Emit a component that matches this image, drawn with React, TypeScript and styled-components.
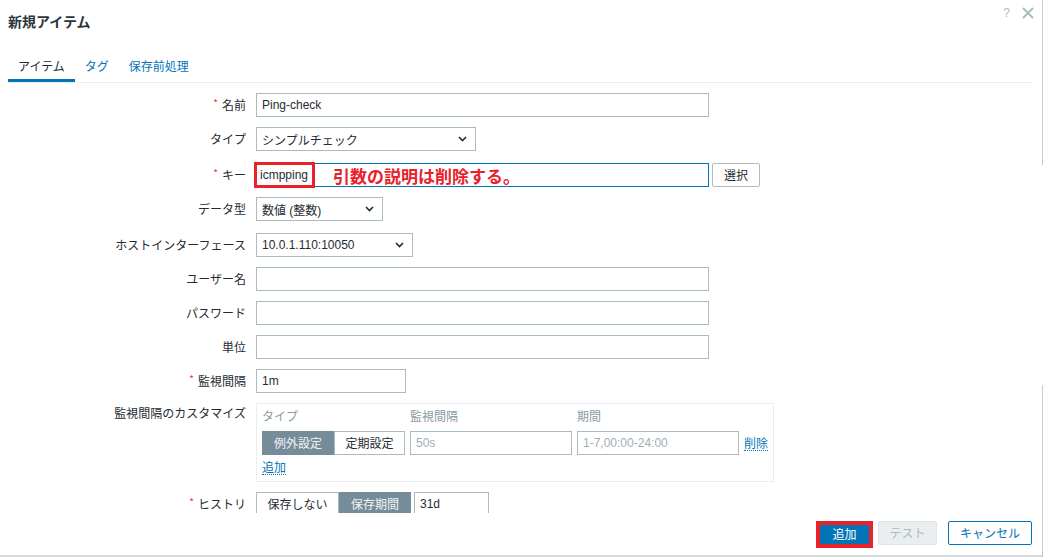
import React from "react";
import styled, { createGlobalStyle } from "styled-components";

const GlobalStyle = createGlobalStyle`
  html, body { margin: 0; padding: 0; background: #fff; }
  body {
    font-family: "Liberation Sans", Arial, "Noto Sans CJK JP", sans-serif;
    font-size: 12px;
    color: #1f2c33;
    overflow: hidden;
  }
  * { box-sizing: border-box; }
`;

const Page = styled.div`
  display: flex;
  width: 1043px;
  height: 557px;
  overflow: hidden;
  background: #fff;
`;

const Dialog = styled.div`
  width: 1042px;
  height: 557px;
  display: flex;
  flex-direction: column;
  border-bottom: 2px solid #d3dadf;
`;

const EdgeStrip = styled.div`
  width: 1px;
  display: flex;
  flex-direction: column;
`;

const EdgeSeg = styled.div<{ $h?: number; $on: boolean }>`
  ${(p) => (p.$h ? `height: ${p.$h}px;` : "flex: 1;")}
  background: ${(p) => (p.$on ? "#c7ced3" : "transparent")};
`;

const Header = styled.div`
  height: 42px;
  display: flex;
  justify-content: space-between;
  padding: 0 8px 0 8px;
  flex-shrink: 0;
`;

const Title = styled.h1`
  margin: 0;
  font-family: "Noto Sans CJK JP", sans-serif;
  font-size: 14px;
  font-weight: bold;
  line-height: 42px;
  color: #2b363d;
`;

const HeaderTools = styled.div`
  display: flex;
  align-items: center;
  gap: 12px;
  height: 26px;
`;

const HelpMark = styled.span`
  font-size: 12px;
  color: #acbbc2;
  line-height: 12px;
`;

const TabBar = styled.div`
  display: flex;
  margin: 0 10px 0 8px;
  height: 41px;
  border-bottom: 1px solid #ebeef0;
  flex-shrink: 0;
`;

const Tab = styled.div<{ $active?: boolean }>`
  height: 40px;
  padding: 17px 10px 6px 10px;
  line-height: 14px;
  font-family: "Noto Sans CJK JP", sans-serif;
  font-size: 12px;
  color: ${(p) => (p.$active ? "#1f2c33" : "#0275b8")};
  border-bottom: 3px solid ${(p) => (p.$active ? "#0275b8" : "transparent")};
`;

const FormArea = styled.div`
  height: 430px;
  overflow: hidden;
  padding: 10px 0 0 8px;
  flex-shrink: 0;
`;

const Row = styled.div<{ $mb?: number; $top?: boolean }>`
  display: grid;
  grid-template-columns: 238px auto;
  column-gap: 10px;
  align-items: ${(p) => (p.$top ? "start" : "center")};
  margin-bottom: ${(p) => p.$mb ?? 10}px;
`;

const Label = styled.div<{ $top?: boolean }>`
  display: flex;
  justify-content: flex-end;
  align-items: center;
  gap: 4px;
  line-height: 14px;
  font-family: "Noto Sans CJK JP", sans-serif;
  font-size: 12px;
  color: #1f2c33;
  padding-top: ${(p) => (p.$top ? 3 : 0)}px;
`;

const Req = styled.span`
  color: #e33734;
  font-size: 10px;
  position: relative;
  top: -2px;
`;

const Field = styled.div`
  display: flex;
  align-items: center;
  gap: 3px;
`;

const TextInput = styled.input<{ $w: number }>`
  width: ${(p) => p.$w}px;
  height: 24px;
  border: 1px solid #acbbc2;
  padding: 0 5px;
  margin: 0;
  font-family: "Liberation Sans", Arial, "Noto Sans CJK JP", sans-serif;
  font-size: 12px;
  color: #1f2c33;
  background: #fff;
  outline: none;
  &::placeholder { color: #a0aeb6; }
`;

const SelectBox = styled.div<{ $w: number }>`
  width: ${(p) => p.$w}px;
  height: 24px;
  border: 1px solid #acbbc2;
  padding: 0 8px 0 5px;
  display: flex;
  align-items: center;
  justify-content: space-between;
  font-family: "Liberation Sans", Arial, "Noto Sans CJK JP", sans-serif;
  color: #1f2c33;
  background: #fff;
`;

const Button = styled.button<{ $w: number; $variant?: "primary" | "outline" | "disabled" | "plain" }>`
  width: ${(p) => p.$w}px;
  height: 24px;
  margin: 0;
  padding: 0;
  border-radius: 2px;
  font-family: "Noto Sans CJK JP", sans-serif;
  font-size: 12px;
  line-height: 22px;
  cursor: default;
  ${(p) => {
    switch (p.$variant) {
      case "primary":
        return "background:#0275b8;border:1px solid #0275b8;color:#fff;";
      case "outline":
        return "background:#fff;border:1px solid #0275b8;color:#0275b8;";
      case "disabled":
        return "background:#ebeef0;border:1px solid #dfe4e7;color:#acbbc2;";
      default:
        return "background:#fff;border:1px solid #acbbc2;color:#1f2c33;";
    }
  }}
`;

const KeyField = styled.div`
  width: 453px;
  height: 24px;
  border: 1px solid #0275b8;
  display: flex;
  align-items: center;
  background: #fff;
`;

const RedBox = styled.div`
  width: 61px;
  height: 26px;
  margin-left: -3px;
  border: 3px solid #e8212b;
  background: #fff;
  padding-left: 3px;
  line-height: 20px;
  font-family: "Liberation Sans", Arial, sans-serif;
  font-size: 12px;
  color: #1f2c33;
  white-space: nowrap;
  flex-shrink: 0;
`;

const Annotation = styled.span`
  margin-left: 18px;
  font-family: "Noto Sans CJK JP", sans-serif;
  font-weight: bold;
  font-size: 17px;
  color: #e8212b;
  white-space: nowrap;
`;

const IntervalBox = styled.div`
  width: 518px;
  border: 1px solid #ebeef0;
  padding: 5px 5px 6px 5px;
`;

const IntervalGrid = styled.div`
  display: grid;
  grid-template-columns: 143px 162px 162px auto;
  column-gap: 5px;
  row-gap: 8px;
  align-items: center;
`;

const ColHead = styled.div`
  line-height: 14px;
  font-family: "Noto Sans CJK JP", sans-serif;
  color: #8a9ba5;
`;

const Segmented = styled.div`
  display: flex;
`;

const SegButton = styled.div<{ $w: number; $active?: boolean }>`
  width: ${(p) => p.$w}px;
  height: 24px;
  line-height: 22px;
  text-align: center;
  font-family: "Noto Sans CJK JP", sans-serif;
  font-size: 12px;
  border: 1px solid ${(p) => (p.$active ? "#768d99" : "#acbbc2")};
  background: ${(p) => (p.$active ? "#768d99" : "#fff")};
  color: ${(p) => (p.$active ? "#f0f3f5" : "#1f2c33")};
`;

const LinkText = styled.span<{ $mt?: number }>`
  display: inline-block;
  margin-top: ${(p) => p.$mt ?? 0}px;
  font-family: "Noto Sans CJK JP", sans-serif;
  color: #0275b8;
  line-height: 14px;
  border-bottom: 1px dotted #0275b8;
  justify-self: start;
`;

const Footer = styled.div`
  height: 42px;
  display: flex;
  justify-content: flex-end;
  align-items: flex-start;
  padding: 8px 10px 0 0;
  flex-shrink: 0;
`;

const RedWrap = styled.div`
  width: 57px;
  height: 27px;
  border: 4px solid #e8212b;
  margin-right: 5px;
  display: flex;
`;

const PrimaryInner = styled.div`
  flex: 1;
  background: #0275b8;
  color: #fff;
  font-family: "Noto Sans CJK JP", sans-serif;
  font-size: 12px;
  line-height: 17px;
  text-align: center;
`;

const Spacer = styled.div<{ $w: number }>`
  width: ${(p) => p.$w}px;
  flex-shrink: 0;
`;

const Chevron = () => (
  <svg width="9" height="6" viewBox="0 0 9 6" fill="none">
    <path d="M1 1l3.5 3.5L8 1" stroke="#1f2c33" strokeWidth="1.6" />
  </svg>
);

const CloseIcon = () => (
  <svg width="12" height="12" viewBox="0 0 12 12" fill="none">
    <path d="M1 1l10 10M11 1L1 11" stroke="#acbbc2" strokeWidth="2" />
  </svg>
);

const FormLabel: React.FC<{ req?: boolean; top?: boolean; children: React.ReactNode }> = ({ req, top, children }) => (
  <Label $top={top}>
    {req && <Req>*</Req>}
    <span>{children}</span>
  </Label>
);

export default function App() {
  return (
    <>
      <GlobalStyle />
      <Page>
        <Dialog>
          <Header>
            <Title>新規アイテム</Title>
            <HeaderTools>
              <HelpMark>?</HelpMark>
              <CloseIcon />
            </HeaderTools>
          </Header>
          <TabBar>
            <Tab $active>アイテム</Tab>
            <Tab>タグ</Tab>
            <Tab>保存前処理</Tab>
          </TabBar>
          <FormArea>
            <Row $mb={10}>
              <FormLabel req>名前</FormLabel>
              <Field>
                <TextInput $w={453} readOnly value="Ping-check" />
              </Field>
            </Row>
            <Row $mb={12}>
              <FormLabel>タイプ</FormLabel>
              <Field>
                <SelectBox $w={220}>
                  <span>シンプルチェック</span>
                  <Chevron />
                </SelectBox>
              </Field>
            </Row>
            <Row $mb={10}>
              <FormLabel req>キー</FormLabel>
              <Field>
                <KeyField>
                  <RedBox>icmpping</RedBox>
                  <Annotation>引数の説明は削除する。</Annotation>
                </KeyField>
                <Button $w={48} $variant="plain">選択</Button>
              </Field>
            </Row>
            <Row $mb={12}>
              <FormLabel>データ型</FormLabel>
              <Field>
                <SelectBox $w={127}>
                  <span>数値 (整数)</span>
                  <Chevron />
                </SelectBox>
              </Field>
            </Row>
            <Row $mb={10}>
              <FormLabel>ホストインターフェース</FormLabel>
              <Field>
                <SelectBox $w={157}>
                  <span>10.0.1.110:10050</span>
                  <Chevron />
                </SelectBox>
              </Field>
            </Row>
            <Row $mb={10}>
              <FormLabel>ユーザー名</FormLabel>
              <Field>
                <TextInput $w={453} readOnly value="" />
              </Field>
            </Row>
            <Row $mb={10}>
              <FormLabel>パスワード</FormLabel>
              <Field>
                <TextInput $w={453} readOnly value="" />
              </Field>
            </Row>
            <Row $mb={10}>
              <FormLabel>単位</FormLabel>
              <Field>
                <TextInput $w={453} readOnly value="" />
              </Field>
            </Row>
            <Row $mb={10}>
              <FormLabel req>監視間隔</FormLabel>
              <Field>
                <TextInput $w={150} readOnly value="1m" />
              </Field>
            </Row>
            <Row $mb={10} $top>
              <FormLabel top>監視間隔のカスタマイズ</FormLabel>
              <IntervalBox>
                <IntervalGrid>
                  <ColHead>タイプ</ColHead>
                  <ColHead>監視間隔</ColHead>
                  <ColHead>期間</ColHead>
                  <span />
                  <Segmented>
                    <SegButton $w={72} $active>例外設定</SegButton>
                    <SegButton $w={71}>定期設定</SegButton>
                  </Segmented>
                  <TextInput $w={162} readOnly placeholder="50s" />
                  <TextInput $w={162} readOnly placeholder="1-7,00:00-24:00" />
                  <LinkText>削除</LinkText>
                </IntervalGrid>
                <LinkText $mt={5}>追加</LinkText>
              </IntervalBox>
            </Row>
            <Row $mb={0}>
              <FormLabel req>ヒストリ</FormLabel>
              <Field>
                <Segmented>
                  <SegButton $w={83}>保存しない</SegButton>
                  <SegButton $w={72} $active>保存期間</SegButton>
                </Segmented>
                <TextInput $w={75} readOnly value="31d" />
              </Field>
            </Row>
          </FormArea>
          <Footer>
            <RedWrap>
              <PrimaryInner>追加</PrimaryInner>
            </RedWrap>
            <Button $w={59} $variant="disabled">テスト</Button>
            <Spacer $w={11} />
            <Button $w={84} $variant="outline">キャンセル</Button>
          </Footer>
        </Dialog>
        <EdgeStrip>
          <EdgeSeg $h={165} $on />
          <EdgeSeg $h={220} $on={false} />
          <EdgeSeg $on />
        </EdgeStrip>
      </Page>
    </>
  );
}
